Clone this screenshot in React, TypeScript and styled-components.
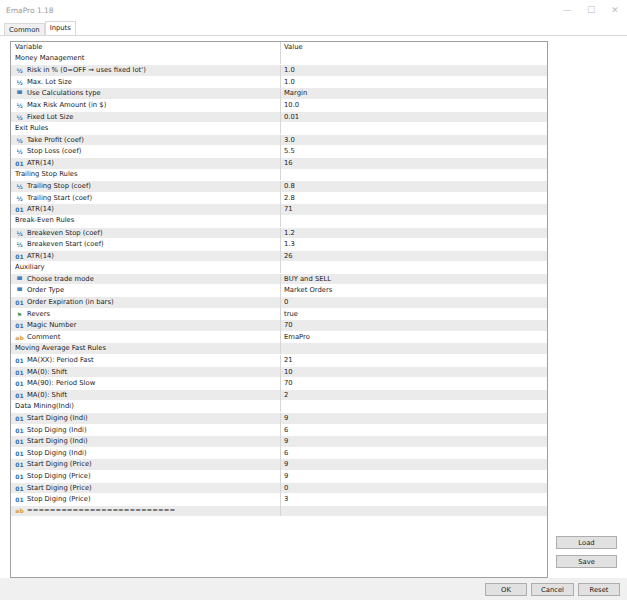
import { createGlobalStyle, styled } from 'styled-components';

const Global = createGlobalStyle`
    body { margin: 0; background: #f0f0f0; font-family: 'DejaVu Sans', 'Liberation Sans', sans-serif; }
`;

const Window = styled.div`
    width: 627px;
    height: 600px;
    display: flex;
    flex-direction: column;
    background: #f0f0f0;
    font-size: 6.8px;
    color: #222;
`;

const TitleBar = styled.div`
    height: 20px;
    background: #fff;
    display: flex;
    align-items: center;
    padding-left: 6px;
    color: #999;
    font-size: 7.5px;
`;

const TitleText = styled.span`
    flex: 1;
`;

const WinCtl = styled.span`
    width: 24px;
    text-align: center;
    color: #bbb;
    font-size: 9px;
`;

const Tabs = styled.div`
    height: 15px;
    display: flex;
    align-items: flex-end;
    padding-left: 4px;
    background: #fff;
`;

const Tab = styled.div<{ active?: boolean }>`
    padding: 2px 4px;
    border: 1px solid #d9d9d9;
    border-bottom: none;
    background: ${({ active }) => (active ? '#fff' : '#f0f0f0')};
    height: ${({ active }) => (active ? 14 : 12)}px;
    box-sizing: border-box;
`;

const Body = styled.div`
    flex: 1;
    display: flex;
    background: #fff;
    padding: 5px 10px 0 10px;
    gap: 8px;
    border-top: 1px solid #d9d9d9;
`;

const Table = styled.div`
    width: 538px;
    height: 537px;
    border: 1px solid #a0a0a0;
    background: #fff;
    box-sizing: border-box;
`;

const Row = styled.div<{ shade?: boolean }>`
    display: grid;
    grid-template-columns: 270px 1fr;
    height: 11.6px;
    line-height: 11.6px;
    background: ${({ shade }) => (shade ? '#ebebeb' : '#fff')};
    border-bottom: 1px solid #fff;
    box-sizing: border-box;
`;

const Cell = styled.div`
    padding-left: 4px;
    border-right: 1px solid #d6d6d6;
    white-space: nowrap;
    overflow: hidden;
    display: flex;
    align-items: center;
    gap: 3px;
`;

const ValueCell = styled.div`
    padding-left: 3px;
    white-space: nowrap;
`;

const Icon = styled.span<{ color: string }>`
    width: 9px;
    font-size: 6px;
    color: ${({ color }) => color};
    font-weight: bold;
    text-align: center;
`;

const Side = styled.div`
    flex: 1;
    display: flex;
    flex-direction: column;
    justify-content: flex-end;
    gap: 6px;
    padding-bottom: 10px;
`;

const Button = styled.div<{ w?: number }>`
    width: ${({ w }) => (w ? `${w}px` : 'auto')};
    height: 13px;
    line-height: 13px;
    text-align: center;
    background: #e1e1e1;
    border: 1px solid #adadad;
    box-sizing: border-box;
`;

const Footer = styled.div`
    height: 22px;
    display: flex;
    justify-content: flex-end;
    align-items: center;
    gap: 4px;
    padding-right: 7px;
`;

type Kind = 'frac' | 'int' | 'enum' | 'bool' | 'str' | null;
const ICONS: Record<string, [string, string]> = {
    frac: ['½', '#2d6fb5'],
    int: ['01', '#2d6fb5'],
    enum: ['▀', '#4a7fb8'],
    bool: ['⚑', '#3a9a3a'],
    str: ['ab', '#d9a030']
};

const ROWS: [Kind, string, string][] = [
    [null, 'Money Management', ''],
    ['frac', 'Risk in % (0=OFF → uses fixed lot\')', '1.0'],
    ['frac', 'Max. Lot Size', '1.0'],
    ['enum', 'Use Calculations type', 'Margin'],
    ['frac', 'Max Risk Amount (in $)', '10.0'],
    ['frac', 'Fixed Lot Size', '0.01'],
    [null, 'Exit Rules', ''],
    ['frac', 'Take Profit (coef)', '3.0'],
    ['frac', 'Stop Loss (coef)', '5.5'],
    ['int', 'ATR(14)', '16'],
    [null, 'Trailing Stop Rules', ''],
    ['frac', 'Trailing Stop  (coef)', '0.8'],
    ['frac', 'Trailing Start (coef)', '2.8'],
    ['int', 'ATR(14)', '71'],
    [null, 'Break-Even Rules', ''],
    ['frac', 'Breakeven Stop  (coef)', '1.2'],
    ['frac', 'Breakeven Start (coef)', '1.3'],
    ['int', 'ATR(14)', '26'],
    [null, 'Auxiliary', ''],
    ['enum', 'Choose trade mode', 'BUY and SELL'],
    ['enum', 'Order Type', 'Market Orders'],
    ['int', 'Order Expiration (in bars)', '0'],
    ['bool', 'Revers', 'true'],
    ['int', 'Magic Number', '70'],
    ['str', 'Comment', 'EmaPro'],
    [null, 'Moving Average Fast Rules', ''],
    ['int', 'MA(XX): Period Fast', '21'],
    ['int', 'MA(0): Shift', '10'],
    ['int', 'MA(90): Period Slow', '70'],
    ['int', 'MA(0): Shift', '2'],
    [null, 'Data Mining(Indi)', ''],
    ['int', 'Start Diging (Indi)', '9'],
    ['int', 'Stop Diging (Indi)', '6'],
    ['int', 'Start Diging (Indi)', '9'],
    ['int', 'Stop Diging (Indi)', '6'],
    ['int', 'Start Diging (Price)', '9'],
    ['int', 'Stop Diging (Price)', '9'],
    ['int', 'Start Diging (Price)', '0'],
    ['int', 'Stop Diging (Price)', '3'],
    ['str', '==========================', '']
];

const App = () => (
    <Window>
        <Global />
        <TitleBar>
            <TitleText>EmaPro 1.18</TitleText>
            <WinCtl>—</WinCtl>
            <WinCtl>☐</WinCtl>
            <WinCtl>✕</WinCtl>
        </TitleBar>
        <Tabs>
            <Tab>Common</Tab>
            <Tab active>Inputs</Tab>
        </Tabs>
        <Body>
            <Table>
                <Row>
                    <Cell>Variable</Cell>
                    <ValueCell>Value</ValueCell>
                </Row>
                {ROWS.map(([kind, name, value], i) => (
                    <Row key={i} shade={i % 2 === 1}>
                        <Cell>
                            {kind && <Icon color={ICONS[kind][1]}>{ICONS[kind][0]}</Icon>}
                            {name}
                        </Cell>
                        <ValueCell>{value}</ValueCell>
                    </Row>
                ))}
            </Table>
            <Side>
                <Button>Load</Button>
                <Button>Save</Button>
            </Side>
        </Body>
        <Footer>
            <Button w={42}>OK</Button>
            <Button w={43}>Cancel</Button>
            <Button w={42}>Reset</Button>
        </Footer>
    </Window>
);

export default App;
